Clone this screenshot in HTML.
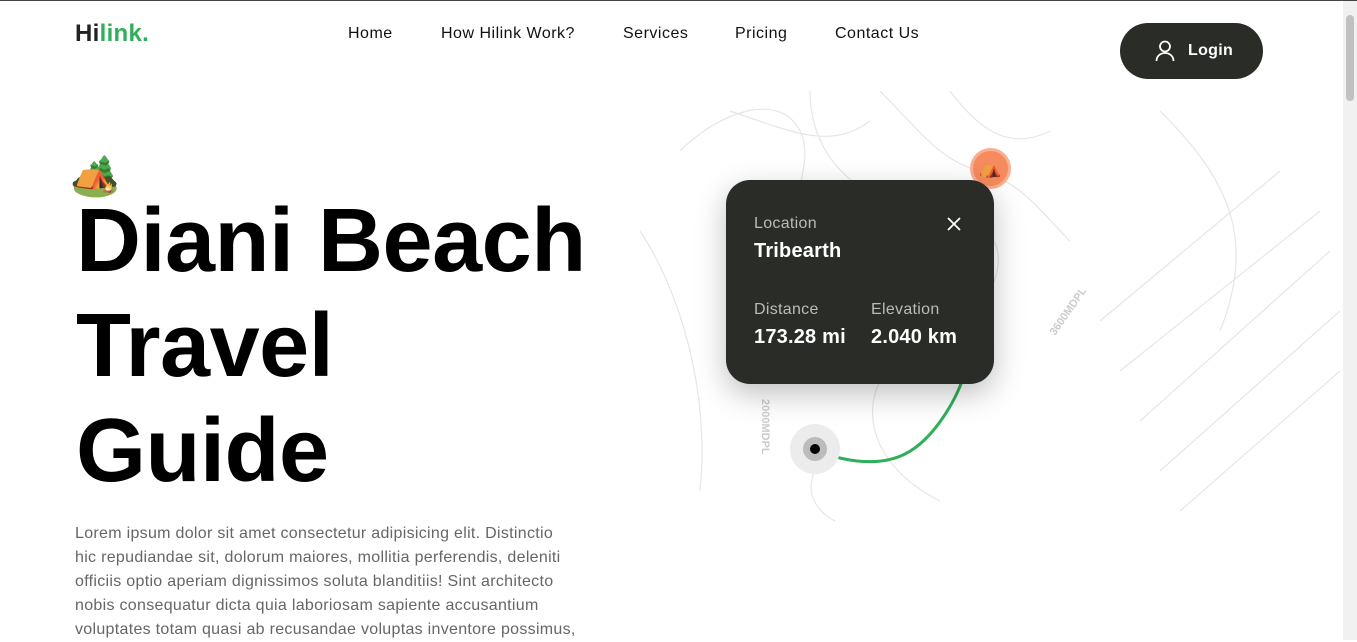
<!DOCTYPE html>
<html><head><style>
*{margin:0;padding:0;box-sizing:border-box}
body{width:1357px;height:639px;overflow:hidden;background:#fff;font-family:"Liberation Sans",sans-serif;position:relative;border-top:1px solid #444}
.logo{position:absolute;left:75px;top:19px;font-size:24px;font-weight:bold;color:#222;letter-spacing:0.3px}
.logo span{color:#30AF5B}
.nav a{position:absolute;top:24px;font-size:16px;color:#111;text-decoration:none;letter-spacing:.5px}
.btn{position:absolute;left:1120px;top:22px;width:143px;height:56px;border-radius:28px;background:#292C27;color:#fff;font-size:16px;font-weight:bold;letter-spacing:.3px}
.btn span{position:absolute;left:68px;top:19px}
h1{position:absolute;left:76px;top:188px;font-size:90px;line-height:105px;font-weight:900;color:#000;letter-spacing:-0.5px}
p{position:absolute;left:75px;top:521px;white-space:nowrap;font-size:16px;line-height:24px;color:#666;letter-spacing:.3px}
.card{position:absolute;left:726px;top:179px;width:268px;height:204px;background:#292C27;border-radius:24px;box-shadow:0 10px 30px rgba(0,0,0,.25);color:#fff}
.card .l{position:absolute;font-size:16px;color:#bbb;letter-spacing:.3px}
.card .v{position:absolute;font-size:20px;font-weight:bold;letter-spacing:.2px}
.sb{position:absolute;right:0;top:0;width:14px;height:639px;background:#f1f1f1}
.sb div{position:absolute;left:3px;top:14px;width:8px;height:86px;background:#c1c1c1;border-radius:4px}
</style></head><body>
<div class="logo">Hi<span>link.</span></div>
<div class="nav">
<a style="left:348px">Home</a><a style="left:441px">How Hilink Work?</a><a style="left:623px">Services</a><a style="left:735px">Pricing</a><a style="left:835px">Contact Us</a>
</div>
<div class="btn"><svg style="position:absolute;left:35px;top:17px" width="20" height="22" viewBox="0 0 20 22" fill="none" stroke="#fff" stroke-width="1.8"><circle cx="10" cy="6.5" r="5"/><path d="M1.5 21c0-5 4-8 8.5-8s8.5 3 8.5 8"/></svg><span>Login</span></div>

<svg style="position:absolute;left:620px;top:90px" width="720" height="450" fill="none" stroke="#e6e6e6" stroke-width="1.2">
<path d="M60 60c40-40 100-60 120-20s-30 90 10 140"/>
<path d="M110 20c60 20 100 40 140 10"/>
<path d="M190 0c0 60 40 110 120 120s80 50 50 100"/>
<path d="M260 0c40 40 60 70 100 80s60 40 90 70"/>
<path d="M330 0c30 40 60 60 100 40"/>
<path d="M540 20c60 60 100 120 60 220"/>
<path d="M480 230l180-150M500 280l200-160M520 330l190-170M540 380l180-160M560 420l160-140"/>
<path d="M20 140c40 60 70 160 60 260"/>
<path d="M195 380c-10 20 0 40 20 50"/>
<path d="M260 290c-20 40 0 90 60 120"/>
<text x="435" y="245" transform="rotate(-55 435 245)" font-size="11" fill="#ccc" stroke="none" font-weight="bold">3600MDPL</text>
<text x="142" y="308" transform="rotate(90 142 308)" font-size="11" fill="#ccc" stroke="none" font-weight="bold">2000MDPL</text>
</svg>
<svg style="position:absolute;left:780px;top:370px" width="200" height="110" fill="none">
<path d="M35 78c20 10 60 20 90 5s55-60 60-83" stroke="#30AF5B" stroke-width="3"/>
<circle cx="35" cy="78" r="25" fill="#ececec"/><circle cx="35" cy="78" r="12" fill="#bcbcbc"/><circle cx="35" cy="78" r="5" fill="#000"/>
</svg>
<div style="position:absolute;left:970px;top:147px;width:41px;height:41px;border-radius:50%;background:#F58B5E;border:3px solid #f9b08f;font-size:18px;text-align:center;line-height:34px">⛺</div>
<div class="card">
<div class="l" style="left:28px;top:35px">Location</div>
<div class="v" style="left:28px;top:60px">Tribearth</div>
<svg style="position:absolute;left:221px;top:37px" width="14" height="14" stroke="#fff" stroke-width="1.8"><path d="M1 1l12 12M13 1L1 13"/></svg>
<div class="l" style="left:28px;top:121px">Distance</div>
<div class="v" style="left:28px;top:146px">173.28 mi</div>
<div class="l" style="left:145px;top:121px">Elevation</div>
<div class="v" style="left:145px;top:146px">2.040 km</div>
</div>
<div style="position:absolute;left:70px;top:152px;font-size:40px;line-height:46px">🏕️</div>
<h1>Diani Beach<br>Travel<br>Guide</h1>
<p>Lorem ipsum dolor sit amet consectetur adipisicing elit. Distinctio<br>hic repudiandae sit, dolorum maiores, mollitia perferendis, deleniti<br>officiis optio aperiam dignissimos soluta blanditiis! Sint architecto<br>nobis consequatur dicta quia laboriosam sapiente accusantium<br>voluptates totam quasi ab recusandae voluptas inventore possimus,</p>
<div class="sb"><div></div></div>
</body></html>
